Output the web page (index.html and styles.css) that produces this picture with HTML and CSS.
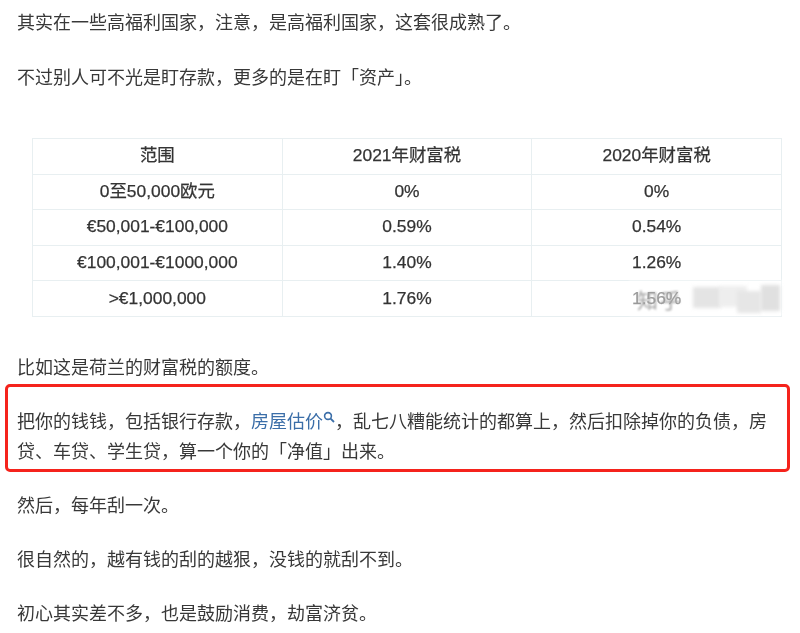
FILE: index.html
```html
<!DOCTYPE html>
<html lang="zh-CN">
<head>
<meta charset="utf-8">
<title>财富税</title>
<link rel="stylesheet" href="styles.css">
</head>
<body>
<main class="article">
  <p class="para para-lead">其实在一些高福利国家，注意，是高福利国家，这套很成熟了。</p>
  <p class="para">不过别人可不光是盯存款，更多的是在盯「资产」。</p>
  <div class="table-wrap">
    <table class="tax">
      <tr><th>范围</th><th>2021年财富税</th><th>2020年财富税</th></tr>
      <tr><td>0至50,000欧元</td><td>0%</td><td>0%</td></tr>
      <tr><td>€50,001-€100,000</td><td>0.59%</td><td>0.54%</td></tr>
      <tr><td>€100,001-€1000,000</td><td>1.40%</td><td>1.26%</td></tr>
      <tr><td>&gt;€1,000,000</td><td>1.76%</td><td>1.56%</td></tr>
    </table>
    <div class="mark">
      <span class="mark-text">知乎</span>
      <span class="smudge smudge-a"></span>
      <span class="smudge smudge-b"></span>
      <span class="smudge smudge-c"></span>
      <span class="smudge smudge-d"></span>
    </div>
  </div>
  <p class="para">比如这是荷兰的财富税的额度。</p>
  <div class="callout">
    <p class="para">把你的钱钱，包括银行存款，<a class="link" href="#">房屋估价<svg class="search" viewBox="0 0 12 12" width="12" height="12" aria-hidden="true"><circle cx="5" cy="5" r="3.4" fill="none" stroke="currentColor" stroke-width="1.6"/><path d="M7.6 7.6 11 11" stroke="currentColor" stroke-width="1.8" fill="none"/></svg></a>，乱七八糟能统计的都算上，然后扣除掉你的负债，房贷、车贷、学生贷，算一个你的「净值」出来。</p>
    <span class="callout-box"></span>
  </div>
  <p class="para">然后，每年刮一次。</p>
  <p class="para">很自然的，越有钱的刮的越狠，没钱的就刮不到。</p>
  <p class="para">初心其实差不多，也是鼓励消费，劫富济贫。</p>
</main>
</body>
</html>
```
FILE: styles.css
```css
html, body {
  margin: 0;
  background: #fff;
}
body {
  width: 800px;
  height: 633px;
  overflow: hidden;
}
.article {
  padding: 6px 20px 0 17px;
  font-family: "Noto Sans CJK SC", "Liberation Sans", sans-serif;
  font-size: 18px;
  line-height: 30px;
  color: #383838;
  filter: blur(0.45px);
}
.para {
  margin: 0 0 24px;
}
.para-lead {
  margin-bottom: 25px;
}
.table-wrap {
  position: relative;
  margin: 47px 0 34px 15px;
  width: 750px;
}
.tax {
  width: 750px;
  height: 179px;
  border-collapse: collapse;
  table-layout: fixed;
  font-family: "Liberation Sans", "Noto Sans CJK SC", sans-serif;
  font-size: 17.4px;
  line-height: 20px;
  color: #333;
  -webkit-text-stroke: 0.25px #333;
}
.tax th, .tax td {
  border: 1px solid #e8eff1;
  padding: 0 0 2px;
  text-align: center;
  font-weight: 400;
}
.mark {
  position: absolute;
  left: 597px;
  top: 142px;
  width: 156px;
  height: 36px;
  background: rgba(255, 255, 255, 0.5);
  filter: blur(1px);
  -webkit-text-stroke: 0;
}
.mark-text {
  position: absolute;
  left: 8px;
  top: 6px;
  font-family: "Noto Sans CJK SC", sans-serif;
  font-size: 21px;
  line-height: 26px;
  letter-spacing: 2px;
  color: #a6a6a6;
}
.smudge {
  position: absolute;
  filter: blur(1.5px);
}
.smudge-a { left: 64px; top: 7px; width: 28px; height: 21px; background: #e4e4e4; }
.smudge-b { left: 90px; top: 6px; width: 28px; height: 21px; background: #eeeeee; }
.smudge-c { left: 108px; top: 11px; width: 24px; height: 22px; background: #e6e6e6; }
.smudge-d { left: 132px; top: 5px; width: 19px; height: 26px; background: #e0e0e0; }
.callout {
  position: relative;
}
.callout-box {
  position: absolute;
  left: -12px;
  top: -21px;
  width: 779px;
  height: 82px;
  border: 3px solid #f5231c;
  border-radius: 5px;
}
.link {
  color: #3b6ea8;
  text-decoration: none;
}
.search {
  vertical-align: 5px;
}
```
